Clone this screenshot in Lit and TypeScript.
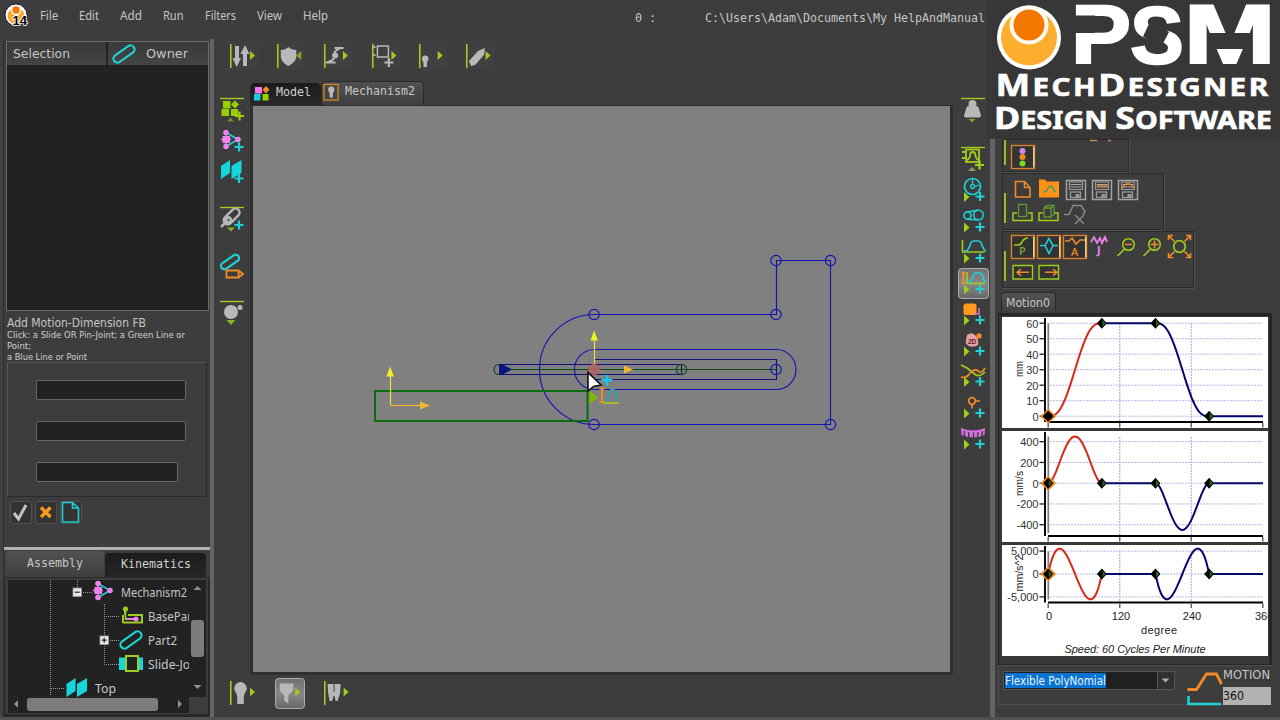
import { LitElement, html, svg, css, nothing } from "lit";
import { customElement } from "lit/decorators.js";

const G = "#a0cc1c";
const C = "#1fd0d4";
const O = "#f08c28";
const V = "#ee82ee";
const L = "#b8b8b8";
const UI = "'Noto Sans','Open Sans',sans-serif";
const TAH = "'DejaVu Sans Condensed','DejaVu Sans',sans-serif";
const MONO = "'DejaVu Sans Mono',monospace";
const VERD = "'DejaVu Sans',sans-serif";
const ARIAL = "'Liberation Sans',sans-serif";

/* A label whose run of text is fitted to a known width. */
const label = (s: string, w: number, h: number, base: number, size: number, font = UI, fill = "#c6c6c6") => html`
  <svg class="lb" width=${w} height=${h}>
    <text x="0" y=${base} font-size=${size} font-family=${font} fill=${fill}
      textLength=${w} lengthAdjust="spacingAndGlyphs">${s}</text>
  </svg>`;

/* An icon tile; the drawing inside uses window coordinates. */
const tile = (x: number, y: number, w: number, h: number, body: unknown, cls = "") => html`
  <svg class="ic ${cls}" width=${w} height=${h} viewBox="${x} ${y} ${w} ${h}">${body}</svg>`;

const plus = (x: number, y: number, c = C) =>
  svg`<path d="M${x - 4.5} ${y}h9M${x} ${y - 4.5}v9" stroke=${c} stroke-width="2.200" fill="none"/>`;
const triR = (x: number, y: number, c = G) =>
  svg`<path d="M${x} ${y - 4.5}l5 4.500l-5 4.500z" fill=${c}/>`;
const vbar = (x: number, y: number) => svg`<path d="M${x} ${y}v24" stroke=${G} stroke-width="1.6"/>`;
const hbar = (y: number, x = 220) => svg`<path d="M${x} ${y}h24" stroke=${G} stroke-width="1.4"/>`;
const link = (cx: number, cy: number, s = 1) =>
  svg`<rect x=${-12 * s} y=${-4 * s} width=${24 * s} height=${8 * s} rx=${4 * s} fill="none" stroke=${C} stroke-width="2.200" transform="translate(${cx} ${cy}) rotate(-35)"/>`;
const mech = (x: number, y: number) => svg`
  <path d="M${x + 5} ${y + 3}L${x + 17} ${y + 10}L${x + 5} ${y + 17}" fill="none" stroke=${C} stroke-width="1.6"/>
  <path d="M${x + 5} ${y + 3}v14M${x} ${y + 10}h10" stroke=${V} stroke-width="1.4"/>
  <rect x=${x + 1.5} y=${y + 6.5} width="7.5" height="7" fill=${V}/>
  <circle cx=${x + 5} cy=${y + 3} r="2.8" fill=${V}/><circle cx=${x + 5} cy=${y + 17} r="2.8" fill=${V}/>
  <circle cx=${x + 17} cy=${y + 10} r="2.8" fill=${V}/>`;
const planes = (x: number, y: number) => svg`
  <path d="M${x} ${y + 6}l9-6v13l-9 6zM${x + 10.5} ${y + 6}l10-6v13l-10 6z" fill="#16d6dc"/>`;
const bulb = (cx: number, y: number, s = 1) => svg`
  <path transform="translate(${cx} ${y}) scale(${s})" d="M0 0a6.3 6.5 0 0 1 6.3 6.5c0 3-3 5-3 8v7.5h-6.600v-7.500c0-3-3-5-3-8a6.300 6.500 0 0 1 6.300-6.500z" fill=${L}/>`;

const TOP = [
  svg`<path d="M237 46v16M245 66v-16" stroke=${L} stroke-width="4"/><path d="M232.500 58h8.500l-4.300 9zM240.500 54h9l-4.500-9z" fill=${L}/>${triR(250, 55.500)}`,
  svg`<path d="M281 50q5 0 7.500-3q3 3 8 3v7q-1 6-8 9q-6.500-3-7.500-9z" fill=${L}/><path d="M301.500 51v9l-5.500-4.500z" fill="#7fa22a"/>`,
  svg`<path d="M335 48h9M326 62.500h10M341 48q-8 3-6 8q-1 5-7 6" fill="none" stroke=${L} stroke-width="2"/><circle cx="335.500" cy="55.500" r="3" fill=${L}/>${triR(343.300, 55.500)}`,
  svg`<rect x="377" y="46" width="11" height="11" fill="none" stroke=${L} stroke-width="1.500"/><path d="M374 46v2M374 54v2" stroke=${L} stroke-width="2"/>${triR(391, 55.500)}${plus(388.500, 62.500, L)}`,
  svg`${bulb(425, 55.500, 0.520)}${triR(437.500, 55.500)}`,
  svg`<path d="M469 61l9-10l7-3l-1 7l-9 10l-4 1z" fill=${L}/>${triR(485.500, 55.500)}`,
];

const LEFT: [number, unknown][] = [
  [95, svg`${hbar(98.500)}<rect x="223" y="101" width="7.500" height="7.500" fill="#9bd000"/><rect x="221.500" y="109" width="7.500" height="7" fill="#9bd000"/><rect x="231" y="109" width="7" height="7" fill="#9bd000"/><path d="M235 100.500l4 4l-4 4l-4-4z" fill="#9bd000"/>${plus(239.500, 116, "#9bd000")}<path d="M227 121.500h7l-3.500-4z" fill="#6f8f28"/>`],
  [126, svg`${mech(221, 129.500)}${plus(239, 147)}`],
  [157, svg`${planes(221, 160)}${plus(239, 178.500)}`],
  [204, svg`${hbar(207.500)}<path d="M221 227l6-6" stroke=${L} stroke-width="2.500"/><rect x="-10" y="-4" width="19" height="8" rx="4" transform="translate(232 216) rotate(-45)" fill="none" stroke=${L} stroke-width="2.400"/><circle cx="228" cy="220" r="4" fill=${L}/><circle cx="228.500" cy="220" r="1.200" fill="#555"/>${plus(239, 225)}<path d="M227 227.500h8l-4 4z" fill="#86b02a"/>`],
  [251, svg`${link(230, 262, 0.85)}<path d="M226.500 270.500h12v7h-12zM238.500 270.500l4.500 3.500l-4.500 3.500" fill="none" stroke=${O} stroke-width="1.800"/>`],
  [298, svg`${hbar(301.500)}<circle cx="231" cy="312" r="7" fill=${L}/><circle cx="240" cy="307.500" r="2.500" fill=${L}/><path d="M226.500 320h9l-4.500 5z" fill="#86b02a"/>`],
];

const addRow = (y: number) => svg`<path d="M964 ${y - 5}l5.500 5l-5.500 5z" fill=${G}/>${plus(980, y - 0.5)}`;
const wave = (y: number) => svg`<path d="M964 ${y + 11}q4 1 6-6q1-4 4-4h4q3 0 4 4q2 6 4 6" fill="none" stroke=${C} stroke-width="1.700"/>`;
const RIGHT: [number, unknown][] = [
  [95, svg`${hbar(98.500, 961)}<circle cx="972.500" cy="104" r="3" fill=${L} stroke=${L} stroke-width="2"/><path d="M968.500 106h8q1.500 0 2 1.500l2.500 8q0 2-2 2h-13q-2 0-2-2l2.500-8q.5-1.500 2-1.500z" fill=${L}/><path d="M968.500 119h7l-3.500 3.500z" fill="#86a52a"/>`],
  [144, svg`${hbar(147.500, 961)}<rect x="966" y="149.500" width="13" height="12.500" fill="none" stroke=${G} stroke-width="1.800"/><path d="M966 160q3 0 4-4q0-4 2.500-4q3 0 3 4q1 4 4 4M962 152h3M962 158h3" fill="none" stroke=${G} stroke-width="1.800"/>${plus(979.500, 165, G)}<path d="M968 171h8l-4-4z" fill="#8a9a62"/>`],
  [175, svg`<circle cx="972.500" cy="186.500" r="8" fill="none" stroke=${C} stroke-width="1.700"/><circle cx="972.500" cy="186.500" r="2" fill="none" stroke=${C} stroke-width="1.300"/><path d="M972.500 179v6M974 187l5-2" stroke=${C} stroke-width="1.300"/>${addRow(197)}`],
  [206, svg`<circle cx="967.500" cy="215.500" r="3.600" fill="none" stroke=${C} stroke-width="1.600"/><circle cx="978.500" cy="215" r="4.800" fill="none" stroke=${C} stroke-width="1.600"/><path d="M967.500 212l11-2M967.500 219.200l11 .8" stroke=${C} stroke-width="1.600"/>${addRow(227.500)}`],
  [237, svg`<path d="M962.500 240v12h22" fill="none" stroke=${G} stroke-width="1.600"/>${wave(240)}${addRow(258.500)}`],
  [268, svg`<path d="M961.500 272.500h4M961.500 283h4M963.500 272v11" stroke=${O} stroke-width="2.200"/><path d="M967 272v11.500h18" fill="none" stroke=${G} stroke-width="1.600"/><path d="M967 282q4 1 6-5q1-4 3-4h3q3 0 4 4q1 5 3 5" fill="none" stroke=${C} stroke-width="1.700"/>${addRow(289.500)}`],
  [299, svg`<rect x="963.500" y="303.500" width="13" height="11.500" rx="2.500" fill="#ff9a1c"/><path d="M979 308v6h-5" fill="none" stroke="#c77bd0" stroke-width="1.500"/>${addRow(320.500)}`],
  [330, svg`<path d="M967 335q5-4 9 1q3 4 2 9q-4 3-9 1q-4-2-3-6z" fill="#e8a0a4"/><circle cx="979" cy="336" r="2.700" fill=${O}/><text x="968" y="344" font-size="6.500" font-weight="bold" font-family=${ARIAL} fill="#5a2020">2D</text>${addRow(351.500)}`],
  [361, svg`<path d="M961 365l6 3q5 4 9 7q4 2 9-3" fill="none" stroke=${G} stroke-width="1.700"/><path d="M961 377q5 2 9-4q5-5 8-2q4 3 7-3" fill="none" stroke=${O} stroke-width="1.700"/>${addRow(382)}`],
  [392, svg`<circle cx="972" cy="401" r="3.300" fill="none" stroke=${O} stroke-width="1.700"/><path d="M975.500 401h4.500M972 404.500v4" stroke=${O} stroke-width="1.600"/>${addRow(413.500)}`],
  [423, svg`<path d="M961 428q12 5 24 0l-.5 7q-11.500 5-23 0z" fill="#d66ede"/><path d="M964 431l1 7M968.500 432l.5 7M973.500 432.500v7M978 432l-.5 7M982.500 431l-1 7" stroke="#3c3c3c" stroke-width="1.300"/>${addRow(444.500)}`],
];

const BOTTOM = [
  svg`${bulb(240.500, 682)}${triR(250, 692)}`,
  svg`<path d="M280 683.500h13.500v7l-5 5v8l-4-2.500v-5.500l-4.500-5z" fill=${L}/>${triR(295.500, 692)}`,
  svg`<path d="M328 684h13l-.5 9l-2.500 8h-2l-1-5h-1l-1.500 5h-2.500l-1.500-8z" fill=${L}/><path d="M334.500 684v8" stroke="#555" stroke-width="1.200"/>${triR(344, 692)}`,
];

/* 3-4-5 polynomial rise and its first two derivatives. */
const rise = [
  (u: number) => 60 * u ** 3 * (10 - 15 * u + 6 * u * u),
  (u: number) => 240 * 30 * u * u * (1 - u) ** 2,
  (u: number) => 960 * (60 * u - 180 * u * u + 120 * u ** 3),
];
const AX = 1048.2;
const px = (deg: number) => AX + (deg * 214.600) / 360;

interface Chart {
  order: number; top: number; zero: number; scale: number; ticks: number[];
  unit: string; unitY: number; hline: number; unitW: number; neg: number;
}
const CHARTS: Chart[] = [
  { order: 0, top: 317, zero: 416.200, scale: 1.550, ticks: [0, 10, 20, 30, 40, 50, 60], unit: "mm", unitY: 377, unitW: 16, hline: 422, neg: 60 },
  { order: 1, top: 431, zero: 483.200, scale: 0.1038, ticks: [-400, -200, 0, 200, 400], unit: "mm/s", unitY: 496, unitW: 25, hline: 536, neg: 0 },
  { order: 2, top: 545, zero: 574, scale: 0.00458, ticks: [-5000, 0, 5000], unit: "mm/s^2", unitY: 591.500, unitW: 37, hline: 602.500, neg: 0 },
];

@customElement("app-root")
export class AppRoot extends LitElement {
  static styles = css`
    :host { display: block; width: 1280px; height: 720px; overflow: hidden; position: relative; background: #3d3d3d; color: #c6c6c6; font-family: "Noto Sans", sans-serif; }
    svg { display: block; flex: none; }
    .lb, .ic { overflow: visible; }
    .menu { height: 39px; display: flex; align-items: flex-start; padding-left: 5px; box-sizing: border-box; }
    .menus { display: flex; gap: 21px; padding-left: 11px; padding-top: 7px; }
    .path { display: flex; gap: 49px; padding: 9px 0 0 307px; }
    .body { height: 681px; display: grid; grid-template-columns: 4px 206px 4px 776px 5px 285px; }
    .edge { background: #414141; border-right: 1px solid #2f2f2f; box-sizing: border-box; }
    .bar { background: #636363; }
    .bar.r { margin-top: 100px; }
    .left { display: flex; flex-direction: column; }
    .list { margin: 2px 1px 0 2px; height: 270px; box-sizing: border-box; border: 1px solid #6a6a6a; background: #222; }
    .lhead { display: grid; grid-template-columns: 99px 100px; gap: 2px; height: 23px; }
    .lhead > div { background: linear-gradient(#393939, #444); display: flex; align-items: center; }
    .c1 { padding-left: 6px; } .c2 { padding-left: 3px; gap: 9px; }
    .help { padding: 4px 0 0 3px; height: 51px; box-sizing: border-box; }
    .group { margin: 0 3px 0 3px; height: 135px; box-sizing: border-box; border: 1px solid #2b2b2b; border-left-color: #555; border-top-color: #555; padding: 17px 0 0 28px; display: flex; flex-direction: column; gap: 21px; }
    .inp { width: 150px; height: 20px; box-sizing: border-box; border: 1px solid #666; border-radius: 2px; background: #222; }
    .inp.s { width: 142px; }
    .btns { display: flex; gap: 3px; padding: 4px 0 0 6px; height: 50px; box-sizing: border-box; }
    .btn { width: 22px; height: 23px; box-sizing: border-box; border: 1px solid #505050; border-radius: 3px; background: #333; }
    .white { height: 3px; background: #b2b2b2; }
    .tabs { display: flex; height: 27px; padding: 1px 0 0 2px; box-sizing: border-box; align-items: flex-end; gap: 1px; }
    .tab { height: 24px; border-radius: 4px 4px 0 0; background: linear-gradient(#1c1c1c, #262626); display: flex; box-sizing: border-box; }
    .tab.on { height: 26px; background: linear-gradient(#515151, #3f3f3f); }
    .t1 { width: 98px; padding: 4px 0 0 21px; } .t2 { width: 101px; padding: 3px 0 0 16px; }
    .tree { height: 140px; box-sizing: border-box; border: 1px solid #282828; border-width: 1px 2px 3px 1px; padding: 2px 2px 0 3px; }
    .view { background: #222; height: 133px; display: grid; grid-template-columns: 181px 17px; grid-template-rows: 117px 16px; }
    .rows { overflow: hidden; }
    .row { display: flex; height: 24px; }
    .main { display: grid; grid-template-rows: 42px 1fr 45px; }
    .tools { display: flex; gap: 17.200px; padding: 2px 0 0 14px; }
    .tools.b { padding-top: 3px; }
    .mid { display: grid; grid-template-columns: 36px 703px 37px; height: 594px; }
    .col { display: flex; flex-direction: column; padding: 14px 0 0 3px; }
    .col.r { padding-left: 5px; }
    .gap { margin-top: 16px; }
    .gapr { margin-top: 18px; }
    .sel { background: linear-gradient(#707070, #888, #666); border-radius: 4px; outline: 1px solid #aaa; outline-offset: -1px; }
    .ctabs { height: 24px; display: flex; align-items: flex-end; }
    .ctab { display: flex; border-radius: 5px 5px 0 0; height: 22px; background: linear-gradient(#1c1c1c, #292929); width: 71px; box-sizing: border-box; padding: 2px 0 0 3px; gap: 6px; }
    .ctab.on { height: 24px; width: 103px; background: linear-gradient(#505050, #404040); border: 1px solid #2a2a2a; border-bottom: 0; padding: 2px 0 0 0; }
    .frame { height: 570px; box-sizing: border-box; border: 3px solid #2f2f2f; border-top-width: 1px; border-bottom-width: 3px; background: #808080; }
    .frame svg { overflow: hidden; }
    .right { padding: 100px 0 0 3px; box-sizing: border-box; }
    .g { box-sizing: border-box; margin-left: 4px; border: 1px solid #2b2b2b; box-shadow: 1px 1px 0 #505050; }
    .mtab { width: 55px; height: 21px; margin: 4px 0 0 3px; border-radius: 4px 4px 0 0; background: linear-gradient(#525252, #3f3f3f); border: 1px solid #2a2a2a; border-bottom: 0; box-sizing: border-box; padding: 1px 0 0 4px; }
    .charts { width: 274px; height: 352px; box-sizing: border-box; border: 1px solid #262626; border-width: 3px 3px 1px 1px; padding: 1px 0 0 3px; background: #383838; display: flex; flex-direction: column; gap: 3px; }
    .charts svg { background: #fff; overflow: hidden; }
    .foot { display: flex; width: 274px; height: 40px; box-sizing: border-box; border: 1px solid #505050; border-width: 1px 0 1px 1px; padding-left: 4px; }
    .combo { margin-top: 5px; width: 172px; height: 19px; box-sizing: border-box; border: 1px solid #555; background: #202020; display: flex; justify-content: space-between; }
    .hl { background: #0a74d4; height: 15px; margin: 1px 0 0 1px; width: 101px; }
    .drop { width: 16px; background: #303030; border-left: 1px solid #555; }
    .mi { margin-left: 12px; }
    .mf { display: flex; flex-direction: column; gap: 5px; padding-top: 2px; }
    .num { width: 48px; height: 18px; background: #b2b2b2; }
    .brand { position: absolute; left: 987px; top: 0; }
    .bottomline { position: absolute; left: 0; top: 717px; width: 1280px; height: 3px; background: #515151; }
  `;

  private chart(c: Chart) {
    const y = (v: number) => c.zero - v * c.scale;
    const f = rise[c.order];
    const run = (from: number, sign: number, base: number) =>
      Array.from({ length: 41 }, (_, i) => {
        const u = i / 40;
        return `${i ? "L" : "M"}${px(from + 90 * u).toFixed(2)} ${y(base + sign * f(u)).toFixed(2)}`;
      }).join("");
    const hi = y(c.order === 0 ? 60 : 0);
    const lo = y(0);
    const dia = (x: number, yy: number) => svg`
      <path d="M${x - 5} ${yy}l5-5.500l5 5.500l-5 5.500z" fill="#000"/><path d="M${x + 0.5} ${yy - 3.5}l3.300 3.500l-3.300 3.500z" fill="#23661c"/>`;
    const maxT = Math.max(...c.ticks), minT = Math.min(...c.ticks);
    return html`<svg width="266" height="111" viewBox="1002 ${c.top} 266 111">
      ${c.ticks.map((t) => svg`
        <path d="M1050 ${y(t)}H1263" stroke="#bcb6ea" stroke-width="1" stroke-dasharray="2 1"/>
        <path d="M1039.500 ${y(t)}h5" stroke="#222" stroke-width="1.300"/>
        <text x="1038.500" y=${y(t) + 4.3} text-anchor="end" font-size="11" font-family=${ARIAL} fill="#333">${t.toLocaleString("en-US")}</text>`)}
      ${[120, 240].map((d) => svg`<path d="M${px(d)} ${c.top + 6}V${c.hline}" stroke="#b4aee6" stroke-width="1.200" stroke-dasharray="2 1"/>`)}
      <path d="M1045 ${c.top + 1}V${c.hline}" stroke="#000" stroke-width="1.900"/>
      <path d="M1048.300 ${Math.min(y(maxT), y(c.order === 1 ? 450 : 0))}V${Math.max(y(minT), c.hline - 3)}" stroke="#7a7a80" stroke-width="1.700"/>
      <path d="M1048 ${c.hline}H1263" stroke="#000" stroke-width="1.900"/>
      ${[0, 120, 240, 360].map((d) => svg`<path d="M${px(d)} ${c.hline + 1}v4.500" stroke="#666" stroke-width="1.500"/>`)}
      <text transform="translate(1022.500 ${c.unitY}) rotate(-90)" font-size="10.500" font-family=${ARIAL} textLength=${c.unitW} lengthAdjust="spacingAndGlyphs" fill="#222">${c.unit}</text>
      <g fill="none" stroke-width="2">
        <path d=${run(0, 1, 0)} stroke="#d62a18"/>
        <path d="M${px(90)} ${hi}H${px(180)}${run(180, -1, c.neg).replace("M", "L")}L${px(270)} ${lo}H1263" stroke="#07076e"/>
      </g>
      <path d="M${AX - 8} ${lo}l8-7.500l8 7.500l-8 7.500z" fill="#e88a20"/>
      ${c.order === 0 ? svg`<path d="M${AX - 5.5} ${lo}l5.500-5.500l5.500 5.500l-5.500 5.500z"/>` : dia(AX, lo)}
      ${dia(px(90), hi)}${dia(px(180), hi)}${dia(px(270), lo)}
      ${c.order === 2 ? svg`<g font-family=${ARIAL} font-size="11" fill="#222">
        <text x="1049" y="620" text-anchor="middle">0</text><text x="1121" y="620" text-anchor="middle">120</text>
        <text x="1192" y="620" text-anchor="middle">240</text><text x="1255" y="620">360</text>
        <text x="1141" y="634" textLength="36">degree</text>
        <text x="1064.500" y="653" font-style="italic" textLength="141">Speed: 60 Cycles Per Minute</text></g>` : nothing}
    </svg>`;
  }

  private canvas() {
    const ring = (x: number, y: number, c = "#1414b0") => svg`<circle cx=${x} cy=${y} r="5.200" stroke=${c}/>`;
    return html`<svg width="697" height="566" viewBox="253 106 697 566">
      <g fill="none" stroke="#1414b0" stroke-width="1.150">
        <path d="M594.500 314.500H776.500V260.500H830.500V424.500H594.500A55 55 0 0 1 594.500 314.500"/>
        <path d="M594.500 349.500H776.500A19.500 20 0 0 1 776.500 389.500H594.500A20 20 0 0 1 594.500 349.500"/>
        <path d="M594.500 359.500H776.500V379.500H594.500M499 364.500H681.500V374.500H499" stroke="#10107c"/>
        <path d="M499 369.500H776" stroke="#0c4a1c"/>
        ${ring(776, 260.500)}${ring(830.500, 260.500)}${ring(776, 314.500)}${ring(594, 314.500)}
        ${ring(594, 424.500)}${ring(830.500, 424.500)}${ring(776, 369.500)}${ring(681.500, 369.500, "#0c4a1c")}
        <path d="M499 364.500a5 5 0 0 0 0 10" stroke="#0c4a1c"/>
        ${ring(594, 369.500, "#d84848")}
        <path d="M589 369.500h11M594.500 364v11" stroke="#d84848"/>
        <path d="M375 391H587.500V421H375Z" stroke="#0a6a0e" stroke-width="2"/>
        <path d="M390.500 405V376M594.500 364V340" stroke="#e8e23a"/>
        <path d="M390.500 405.500H421" stroke="#f4b62c"/>
      </g>
      <path d="M499 364.500h4l9 5l-9 5h-4z" fill="#0a1680"/>
      <path d="M386.500 376.500l3.500-10l4 10zM590.500 340.500l3.500-10l4 10z" fill="#eef022"/>
      <path d="M420 401.500l10 4l-10 4zM624 365.500l9 4l-9 4z" fill="#f4b62c"/>
      <path d="M589.500 391l9 6.500l-9 6.500z" fill="#7fb400"/>
      <path d="M607 375v10.500M601.500 380.200h11" stroke="#16c4ec" stroke-width="2.600"/>
      <path d="M602 388v14M599.500 388.500h5M599.500 402h5" stroke=${O} stroke-width="2"/>
      <path d="M605 401q3 0 4.500-8q1-4 3-4q2 0 3 4q1.500 8 3.500 8" fill="none" stroke="#1fa8b8" stroke-width="1.500"/>
      <path d="M603 403h16" stroke="#a8c01c" stroke-width="1.800"/>
      <path d="M588 372.500v18.500l5.500-4.500l7.500-1.500z" fill="#fff" stroke="#101014" stroke-width="1.600"/>
    </svg>`;
  }

  private floppy(x: number, mark: unknown) {
    return svg`<rect x=${x} y="180.500" width="19" height="19" fill="none" stroke="#a2a2a2" stroke-width="1.500"/>
      <rect x=${x + 3} y="182" width="13" height="7.500" fill="none" stroke="#9a9a9a" stroke-width="1.100"/>
      <path d="M${x + 4} 184.500h11M${x + 4} 187h11" stroke="#aaa" stroke-width="1"/>
      <rect x=${x + 4} y="192" width="10" height="5.500" fill="none" stroke="#9a9a9a" stroke-width="1.300"/>
      <path d="M${x + 9} 194h4v3h-4z" fill="#9a9a9a"/>${mark}`;
  }

  private box(x: number, y: number) {
    return svg`<rect x=${x} y=${y} width="23" height="23" fill="#333" stroke="#e08428" stroke-width="1.300"/><path d="M${x + 22.2} ${y + 1}v21" stroke="#f8d890" stroke-width="1.300"/>`;
  }

  render() {
    const menus: [string, number][] = [["File", 18], ["Edit", 20], ["Add", 22], ["Run", 20.5], ["Filters", 31], ["View", 25], ["Help", 25]];
    const toggle = (x: number, y: number, sign: string) => svg`<rect x=${x - 4} y=${y - 4} width="8.500" height="8.500" fill="#e8e8f0" stroke="#999" stroke-width=".8"/><path d=${sign === "+" ? `M${x - 2.3} ${y + 0.2}h5M${x + 0.2} ${y - 2.3}v5` : `M${x - 2.3} ${y + 0.2}h5`} stroke="#222" stroke-width="1.200"/>`;
    const dots = (d: string) => svg`<path d=${d} stroke="#9a9a9a" stroke-width="1" stroke-dasharray="1 1" fill="none"/>`;
    const rows: [number, number, unknown, string, number][] = [
      [580, 121, svg`${dots("M50.500 580v24M77.500 580v7M83 592.500h9")}${toggle(77, 592, "-")}${mech(93, 580.500)}`, "Mechanism2", 66],
      [604, 148, svg`${dots("M50.500 604v24M104.500 604v24M106 616.500h13")}<path d="M125 615v-6M123 622.500h19v-7.500h-14M123 615v8" fill="none" stroke=${G} stroke-width="2"/><circle cx="125.500" cy="609" r="2.600" fill=${G}/><path d="M125.500 611v8h9" fill="none" stroke=${G} stroke-width="1.600"/><path d="M126 619h10" stroke=${V} stroke-width="1.800"/><circle cx="136" cy="619" r="2.500" fill=${V}/>`, "BasePart", 48],
      [628, 148, svg`${dots("M50.500 628v24M104.500 628v24M110 640.500h9")}${toggle(104, 640, "+")}${link(131, 640)}`, "Part2", 29],
      [652, 148, svg`${dots("M50.500 652v24M104.500 652v12.500h15")}<rect x="119" y="657.500" width="24" height="12.500" fill="#16d6dc"/><rect x="126" y="656" width="12" height="15" fill="#222" stroke=${G} stroke-width="2"/>`, "Slide-Joint2", 64.5],
      [676, 95, svg`${dots("M50.500 676v20M51 688.500h14")}${planes(66.500, 678)}`, "Top", 21],
    ];
    return html`
      <div class="menu">
        ${tile(5, 0, 24, 28, svg`<circle cx="16" cy="15" r="11" fill="#fff" stroke="#1c1c4a" stroke-width="1"/><circle cx="16" cy="16" r="8.500" fill="#fba92e"/><circle cx="16" cy="10" r="4.500" fill="#f47a00" stroke="#fff" stroke-width="1.500"/><text x="12.500" y="25" font-size="12.500" font-weight="bold" font-family=${ARIAL} fill="#000" stroke="#fff" stroke-width="1.600" paint-order="stroke" textLength="14.500" lengthAdjust="spacingAndGlyphs">14</text>`)}
        <div class="menus">${menus.map(([s, w]) => label(s, w, 18, 13, 12.3))}</div>
        <div class="path">${label("0 :", 21, 16, 13, 11.6, MONO)}${label("C:\\Users\\Adam\\Documents\\My HelpAndManual", 280, 16, 13, 11.6, MONO)}</div>
      </div>
      <div class="body">
        <div class="edge"></div>
        <div class="left">
          <div class="list"><div class="lhead">
            <div class="c1">${label("Selection", 57, 20, 13.7, 12.5, VERD)}</div>
            <div class="c2">${tile(111, 42, 26, 22, link(124, 53))}${label("Owner", 42, 20, 13.7, 12.500, VERD)}</div>
          </div></div>
          <div class="help">
            ${label("Add Motion-Dimension FB", 139, 13, 12, 12, TAH)}
            ${label("Click: a Slide OR Pin-Joint; a Green Line or", 178, 11, 10, 9.4, TAH, "#d0d0d0")}
            ${label("Point;", 24, 11, 10, 9.4, TAH, "#d0d0d0")}
            ${label("a Blue Line or Point", 80, 11, 10, 9.4, TAH, "#d0d0d0")}
          </div>
          <div class="group"><div class="inp"></div><div class="inp"></div><div class="inp s"></div></div>
          <div class="btns">
            <div class="btn">${tile(12, 502, 20, 21, svg`<path d="M15 513l4.500 6l7.500-14" fill="none" stroke="#c4c4c4" stroke-width="3"/>`)}</div>
            <div class="btn">${tile(36, 502, 20, 21, svg`<path d="M41 507.500l9.500 9.500M50.500 507.500l-9.500 9.500" stroke="#f89a20" stroke-width="3.400"/>`)}</div>
            <div class="btn">${tile(61, 502, 20, 21, svg`<path d="M62.500 502.500h10l6 5.500v14h-16zM72.500 502.500v5.500h6" fill="none" stroke=${C} stroke-width="1.600"/>`)}</div>
          </div>
          <div class="white"></div>
          <div class="tabs">
            <div class="tab on t1">${label("Assembly", 56, 18, 12, 11.6, MONO)}</div>
            <div class="tab t2">${label("Kinematics", 70, 18, 12, 11.6, MONO, "#d0d0d0")}</div>
          </div>
          <div class="tree"><div class="view">
            <div class="rows">${rows.map(([y, x, art, s, w]) => html`<div class="row">${tile(8, y, x - 8, 24, art)}${label(s, w, 24, 17, 12.500)}</div>`)}</div>
            ${tile(189, 580, 17, 117, svg`<path d="M193.500 590h8l-4-4zM193.500 685h8l-4 4z" fill="#909090"/><rect x="191" y="620" width="13" height="37" rx="3" fill="#7c7c7c"/>`)}
            ${tile(8, 697, 181, 16, svg`<path d="M18 700v8l-4-4zM178 700v8l4-4z" fill="#909090"/><rect x="27" y="698" width="131" height="13" rx="3" fill="#7c7c7c"/>`)}
            <svg class="ic" width="17" height="16"><rect width="17" height="16" fill="#3d3d3d"/></svg>
          </div></div>
        </div>
        <div class="bar"></div>
        <div class="main">
          <div class="tools">${TOP.map((b, i) => tile(228 + 47.2 * i, 41, 30, 29, svg`<rect x=${228 + 47.2 * i} y="41" width="30" height="29" fill="#404040"/>${vbar(230.800 + 47.2 * i, 44)}${b}`))}</div>
          <div class="mid">
            <div class="col">${LEFT.map(([y, b], i) => tile(217, y, 31, 31, b, i > 2 ? "gap" : ""))}</div>
            <div>
              <div class="ctabs">
                <div class="ctab">${tile(253, 84, 17, 17, svg`<rect x="255" y="86" width="7" height="6.500" fill="#f47af4"/><path d="M266 85l3.500 3.700l-3.500 3.800l-3.500-3.800z" fill=${O}/><rect x="254" y="93" width="6.500" height="6.500" fill="#16cfe0"/><rect x="262.500" y="93" width="6" height="6.500" fill="#9bd000"/>`)}${label("Model", 35, 16, 11, 11.6, MONO, "#d0d0d0")}</div>
                <div class="ctab on">${tile(322, 83, 17, 17, svg`<rect x="324" y="83.500" width="14" height="15.500" fill="#444" stroke="#d08a28" stroke-width="1.300"/>${bulb(331.300, 85.500, 0.5)}`)}${label("Mechanism2", 70, 16, 11, 11.6, MONO)}</div>
              </div>
              <div class="frame">${this.canvas()}</div>
            </div>
            <div class="col r">${RIGHT.map(([y, b], i) => tile(958, y, 31, 31, b, `${i === 1 ? "gapr" : ""} ${i === 5 ? "sel" : ""}`))}</div>
          </div>
          <div class="tools b">${BOTTOM.map((b, i) => tile(228 + 47.2 * i, 678, 30, 31, svg`${i === 1 ? nothing : vbar(230.800 + 47.2 * i, 681)}${b}`, i === 1 ? "sel" : ""))}</div>
        </div>
        <div class="bar r"></div>
        <div class="right">
          <div class="g" style="width:127px;height:33px">${tile(1003, 140, 120, 31, svg`<path d="M1005 140v25" stroke=${G} stroke-width="1.800"/>${this.box(1011.5, 145.5)}<circle cx="1022.500" cy="151" r="3" fill="#cc88ee"/><circle cx="1022.500" cy="157" r="3" fill=${O}/><circle cx="1022.500" cy="163.500" r="3" fill="#7fd81c"/><path d="M1090 140.500h7M1108 140.500h3" stroke="#c09048" stroke-width="1.500"/>`)}</div>
          <div class="g" style="width:162px;height:57px;margin-top:1px">${tile(1003, 174, 160, 55, svg`<path d="M1005 193v30" stroke=${G} stroke-width="1.800"/>
            <path d="M1015.500 181.500h9l5.500 6v9.500h-14.500zM1024.500 181.500v6h5.500" fill="none" stroke=${O} stroke-width="1.600"/>
            <path d="M1039 179.500h6l1.500 2h12.500v16h-20z" fill="#ff9114"/><path d="M1043 192q4 0 5-4q2-4 5 0q1 4 3 4" fill="none" stroke="#4f9a60" stroke-width="1.600"/>
            ${this.floppy(1066.500, nothing)}${this.floppy(1092.500, svg`<path d="M1097 186h11" stroke=${O} stroke-width="1.300"/>`)}${this.floppy(1118.500, svg`<path d="M1122 188l4-4h4l4 4" fill="none" stroke=${O} stroke-width="1.300"/>`)}
            <path d="M1017 213h-4v7.500h19v-7.500h-4" fill="none" stroke=${G} stroke-width="1.500"/><rect x="1018.500" y="204.500" width="8" height="12" fill="none" stroke="#5f9a38" stroke-width="1.300"/>
            <path d="M1043 213h-4v7.500h19v-7.500h-4" fill="none" stroke=${G} stroke-width="1.500"/><path d="M1044 208h7v9h-7zM1044 208l3-2.500h7v9l-3 2.500M1051 208l3-2.500" fill="none" stroke="#5f9a38" stroke-width="1.300"/>
            <path d="M1064 214.500h5l4-9h8l4 6l-2 3M1075 215l9 9M1084 215l-9 9" fill="none" stroke="#8c8c8c" stroke-width="1.400"/>`)}</div>
          <div class="g" style="width:192px;height:57px;margin-top:1px">${tile(1003, 232, 190, 55, svg`<path d="M1005 251v30" stroke=${G} stroke-width="1.800"/>
            ${this.box(1011.5, 235.5)}${this.box(1037.5, 235.5)}${this.box(1063.500, 235.5)}
            <path d="M1014 245h4q3 0 4-3q2-4 6-4" fill="none" stroke=${G} stroke-width="1.600"/><text x="1019" y="255" font-size="11" font-weight="600" font-family=${UI} fill="#78a038">P</text>
            <path d="M1040 245.500h5l4-7l4 7h5M1045 245.500l4 8l4-8" fill="none" stroke=${C} stroke-width="1.600"/>
            <path d="M1065 241l4 0l3-3l4 6l4-4h5" fill="none" stroke=${O} stroke-width="1.600"/><text x="1071" y="255.500" font-size="11" font-weight="500" font-family=${UI} fill=${O}>A</text>
            <path d="M1091 242l3-5l3 6l3-5l2 5l3-6l2 5" fill="none" stroke=${V} stroke-width="1.800"/><text x="1097" y="253.500" font-size="11" font-weight="bold" font-family=${UI} fill=${V}>J</text>
            <circle cx="1128.500" cy="244.500" r="5.800" fill="none" stroke=${G} stroke-width="1.500"/><path d="M1124.500 249l-7 7" stroke=${G} stroke-width="1.600"/><path d="M1125 244.500h7" stroke=${O} stroke-width="1.500"/>
            <circle cx="1154.500" cy="244.500" r="5.800" fill="none" stroke=${G} stroke-width="1.500"/><path d="M1150.500 249l-7 7" stroke=${G} stroke-width="1.600"/><path d="M1150.500 244.500h8M1154.500 240.500v8" stroke=${O} stroke-width="1.500"/>
            <circle cx="1179.500" cy="246.500" r="5.800" fill="none" stroke=${G} stroke-width="1.700"/>
            <path d="M1169 236l5.500 5.500M1190 236l-5.500 5.500M1169 257l5.500-5.500M1190 257l-5.500-5.500M1168.500 240v-4.500h4.500M1190.500 240v-4.500h-4.500M1168.500 253v4.500h4.500M1190.500 253v4.500h-4.500" fill="none" stroke=${O} stroke-width="1.600"/>
            <path d="M1013 265.500h19.500v13.500h-19.500zM1039 265.500h19.500v13.500h-19.500z" fill="#333" stroke=${G} stroke-width="1.400"/>
            <path d="M1029 272.300h-11M1021 269l-4 3.300l4 3.300M1045 272.300h11M1053 269l4 3.300l-4 3.300" fill="none" stroke=${O} stroke-width="1.500"/>`)}</div>
          <div class="mtab">${label("Motion0", 44, 18, 12.5, 12, TAH)}</div>
          <div class="charts">${CHARTS.map((c) => this.chart(c))}</div>
          <div class="foot">
            <div class="combo"><div class="hl">${label("Flexible PolyNomial", 101, 15, 11.500, 12, TAH, "#e8f2ff")}</div><div class="drop">${tile(0, 0, 15, 17, svg`<path d="M3.500 6.500h8l-4 4z" fill="#aaa"/>`)}</div></div>
            <div class="mi">${tile(1188, 666, 36, 39, svg`<path d="M1188.500 689.500h9l10-15.500h10l5 10" fill="none" stroke="#f08c28" stroke-width="2.800"/><path d="M1189.500 696v8h32.500" fill="none" stroke=${C} stroke-width="2.600"/>`)}</div>
            <div class="mf">${label("MOTION", 47, 14, 10.500, 12, TAH)}<div class="num">${label("360", 21, 18, 12.500, 12, TAH, "#111")}</div></div>
          </div>
        </div>
      </div>
      <div class="bottomline"></div>
      <svg class="brand" width="293" height="139" viewBox="987 0 293 139">
        <rect x="987" width="293" height="139" fill="#373737"/>
        <circle cx="1029" cy="37.500" r="32" fill="#fff"/><circle cx="1029" cy="37.500" r="28" fill="#fdae2e"/>
        <circle cx="1029" cy="25" r="19.500" fill="#fffaf0"/><circle cx="1029" cy="25" r="15.500" fill="#f47800"/>
        <g font-family=${ARIAL} font-weight="bold" fill="#fff" stroke="#fff" stroke-width="2" font-size="83">
          <text x="1071" y="63.300" textLength="60" lengthAdjust="spacingAndGlyphs">P</text>
          <text x="1130.500" y="63.200" font-size="80.500" stroke-width="2.500" textLength="53" lengthAdjust="spacingAndGlyphs">S</text>
          <text x="1183.700" y="63.300" textLength="92" lengthAdjust="spacingAndGlyphs">M</text>
        </g>
        <path d="M1075 15.500h20v17.500h-20zM1151.500 18.500l17.500 13.500l-8 15.500l-18-11zM1209 33h43v16h-43z" fill="#373737"/>
        <g font-family="'Noto Sans','Open Sans',sans-serif" font-weight="bold" fill="#fff" stroke="#fff" stroke-width=".6" font-size="25">
          <text x="995.500" y="96.300" letter-spacing="2" textLength="275" lengthAdjust="spacingAndGlyphs"><tspan font-size="31">M</tspan>ECH<tspan font-size="31">D</tspan>ESIGNER</text>
          <text x="994" y="128.500" textLength="278" lengthAdjust="spacingAndGlyphs"><tspan font-size="31">D</tspan>ESIGN <tspan font-size="31">S</tspan>OFTWARE</text>
        </g>
      </svg>`;
  }
}
